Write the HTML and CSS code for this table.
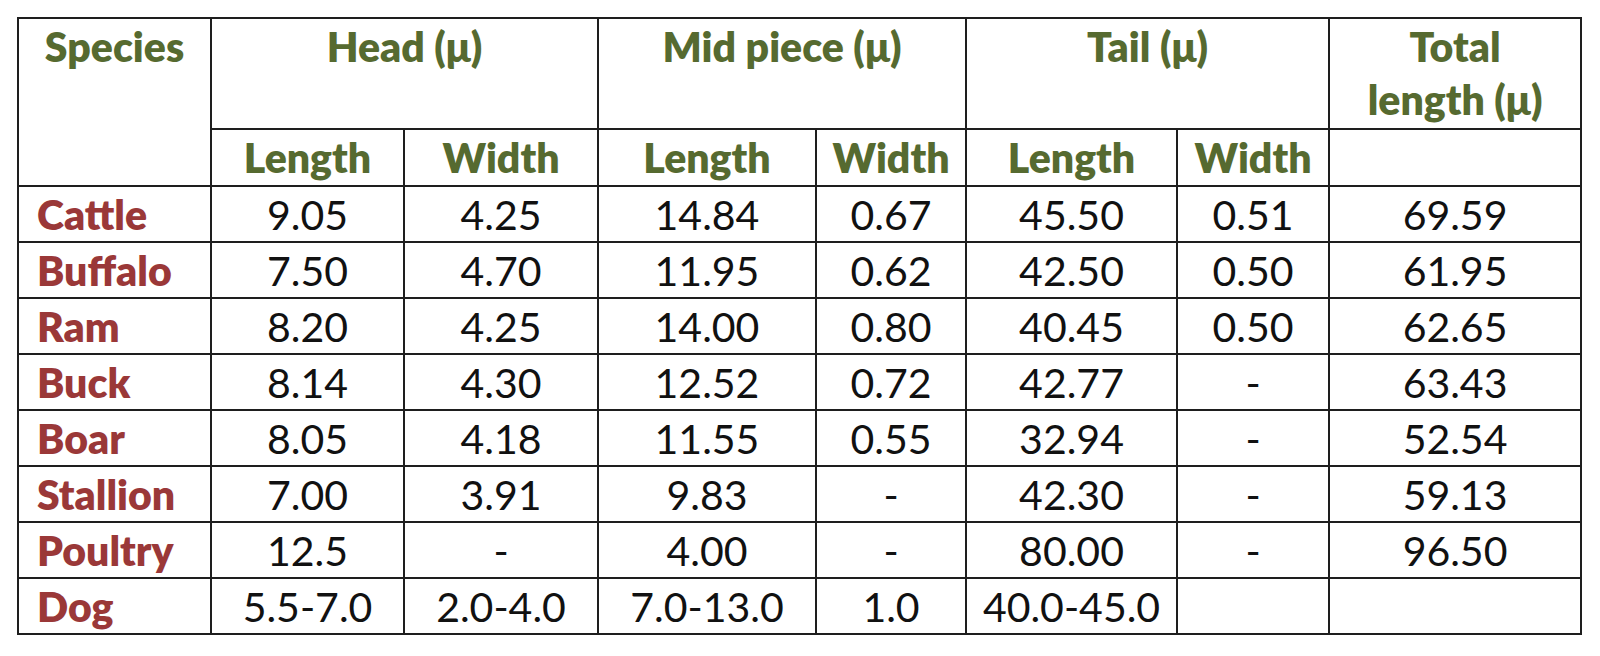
FILE: index.html
```html
<!DOCTYPE html>
<html>
<head>
<meta charset="utf-8">
<link rel="stylesheet" href="styles.css">
</head>
<body>
<div class="wrap">
<table class="sperm">
  <colgroup>
    <col class="c-sp"><col class="c-hl"><col class="c-hw"><col class="c-ml"><col class="c-mw"><col class="c-tl"><col class="c-tw"><col class="c-tot">
  </colgroup>
  <thead>
    <tr class="h1">
      <th rowspan="2" class="top">Species</th>
      <th colspan="2" class="top">Head (μ)</th>
      <th colspan="2" class="top">Mid piece (μ)</th>
      <th colspan="2" class="top">Tail (μ)</th>
      <th class="top">Total<br>length (μ)</th>
    </tr>
    <tr class="h2">
      <th>Length</th><th>Width</th><th>Length</th><th>Width</th><th>Length</th><th>Width</th><th></th>
    </tr>
  </thead>
  <tbody>
    <tr><th class="name">Cattle</th><td>9.05</td><td>4.25</td><td>14.84</td><td>0.67</td><td>45.50</td><td>0.51</td><td>69.59</td></tr>
    <tr><th class="name">Buffalo</th><td>7.50</td><td>4.70</td><td>11.95</td><td>0.62</td><td>42.50</td><td>0.50</td><td>61.95</td></tr>
    <tr><th class="name">Ram</th><td>8.20</td><td>4.25</td><td>14.00</td><td>0.80</td><td>40.45</td><td>0.50</td><td>62.65</td></tr>
    <tr><th class="name">Buck</th><td>8.14</td><td>4.30</td><td>12.52</td><td>0.72</td><td>42.77</td><td>-</td><td>63.43</td></tr>
    <tr><th class="name">Boar</th><td>8.05</td><td>4.18</td><td>11.55</td><td>0.55</td><td>32.94</td><td>-</td><td>52.54</td></tr>
    <tr><th class="name">Stallion</th><td>7.00</td><td>3.91</td><td>9.83</td><td>-</td><td>42.30</td><td>-</td><td>59.13</td></tr>
    <tr><th class="name">Poultry</th><td>12.5</td><td>-</td><td>4.00</td><td>-</td><td>80.00</td><td>-</td><td>96.50</td></tr>
    <tr><th class="name">Dog</th><td>5.5-7.0</td><td>2.0-4.0</td><td>7.0-13.0</td><td>1.0</td><td>40.0-45.0</td><td></td><td></td></tr>
  </tbody>
</table>
</div>
</body>
</html>
```
FILE: styles.css
```css
html, body {
  margin: 0;
  padding: 0;
  background: #ffffff;
}
.wrap {
  padding: 17px 0 0 17px;
}
.sperm {
  border-collapse: collapse;
  table-layout: fixed;
  width: 1565px;
  font-family: "Lato", "Open Sans", sans-serif;
  font-size: 41px;
  color: #111111;
}
.c-sp { width: 193px; }
.c-hl { width: 193px; }
.c-hw { width: 194px; }
.c-ml { width: 218px; }
.c-mw { width: 150px; }
.c-tl { width: 211px; }
.c-tw { width: 152px; }
.c-tot { width: 252px; }
.sperm th, .sperm td {
  border: 2px solid #1e1e1e;
  padding: 0;
  text-align: center;
  vertical-align: middle;
  line-height: 53px;
  white-space: nowrap;
}
.sperm th {
  color: #566a30;
  font-weight: 800;
}
.sperm th.top {
  vertical-align: top;
  padding-top: 1px;
}
.h1 { height: 111px; }
.h2 { height: 57px; }
.sperm tbody tr { height: 56px; }
.sperm th.name {
  color: #9a3838;
  text-align: left;
  padding-left: 18px;
}
```
